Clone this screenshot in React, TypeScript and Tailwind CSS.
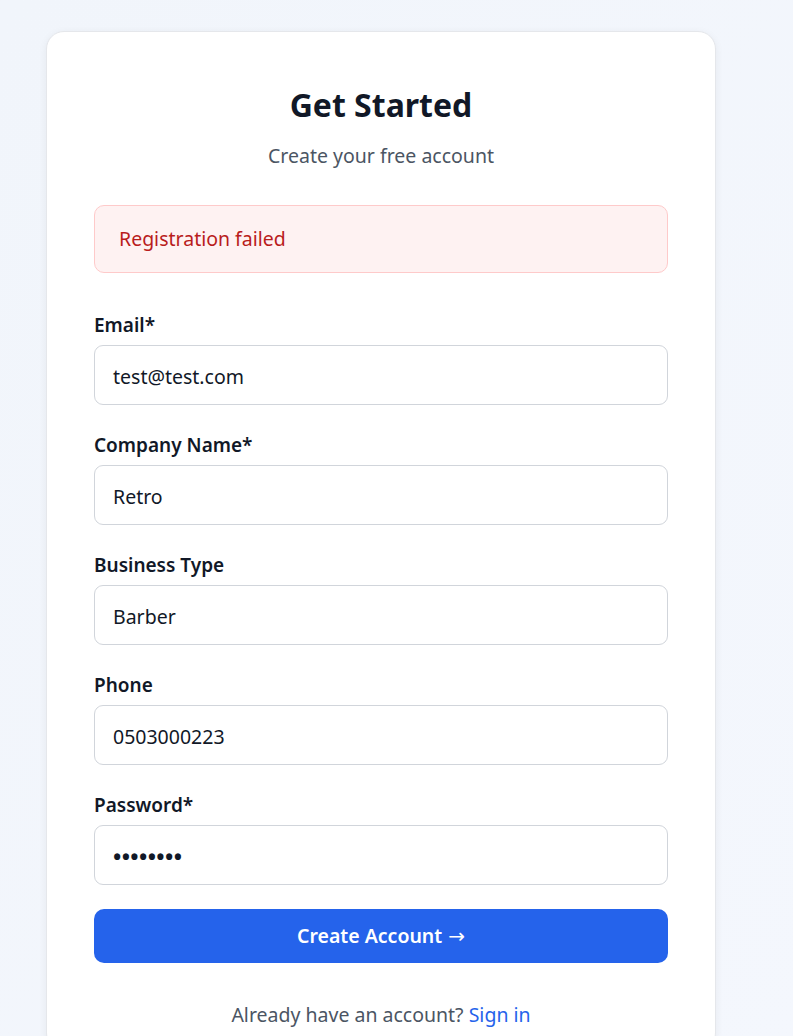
export default function App() {
  const fields = [
    { label: "Email*", value: "test@test.com" },
    { label: "Company Name*", value: "Retro" },
    { label: "Business Type", value: "Barber" },
    { label: "Phone", value: "0503000223" },
    { label: "Password*", value: "••••••••" },
  ];

  return (
    <div
      className="min-h-[1036px] bg-gradient-to-br from-[#f1f5fb] to-[#f4f7fd] pt-[31px] pl-[46px]"
      style={{ fontFamily: '"Noto Sans", "Open Sans", sans-serif' }}
    >
      {/* 카드 */}
      <div className="w-[670px] h-[1020px] bg-white rounded-[18px] border border-[#e5e7eb] shadow-[0_2px_8px_rgba(15,23,42,0.06)] px-[47px] pt-[50px]">
        {/* 헤더 */}
        <div className="text-center mb-[34px]">
          <h1 className="text-[32px] leading-[46px] font-bold text-[#111827]">Get Started</h1>
          <p className="mt-[13px] text-[19.5px] leading-[30px] text-[#4b5563]">Create your free account</p>
        </div>

        {/* 에러 메시지 */}
        <div className="rounded-[10px] border border-[#fecaca] bg-[#fef2f2] px-6 py-[17px] text-[19.5px] leading-[32px] text-[#b91c1c]">
          Registration failed
        </div>

        {/* 폼 */}
        <div className="mt-[37px] flex flex-col gap-[25px]">
          {fields.map((f) => (
            <div key={f.label}>
              <label className="block mb-[4px] text-[19px] leading-[31px] font-semibold text-[#111827]">
                {f.label}
              </label>
              <div className="h-[60px] rounded-[9px] border border-[#d1d5db] px-[18px] pt-[3px] flex items-center text-[19.5px] text-[#111827]">
                {f.label === "Password*" ? (
                  <span className="text-[22px] tracking-[0.4px] font-bold">{f.value}</span>
                ) : (
                  f.value
                )}
              </div>
            </div>
          ))}
        </div>

        <button
          type="button"
          className="mt-[24px] w-full h-[54px] rounded-[10px] bg-[#2563eb] text-white text-[19.5px] font-semibold flex items-center justify-center gap-[6px]"
        >
          Create Account
          <span className="text-[20px] font-normal" style={{ fontFamily: '"DejaVu Sans", sans-serif' }}>→</span>
        </button>

        <p className="mt-[37px] text-center text-[19.5px] leading-[30px] text-[#4b5563]">
          Already have an account? <span className="text-[#2563eb]">Sign in</span>
        </p>
      </div>
    </div>
  );
}
